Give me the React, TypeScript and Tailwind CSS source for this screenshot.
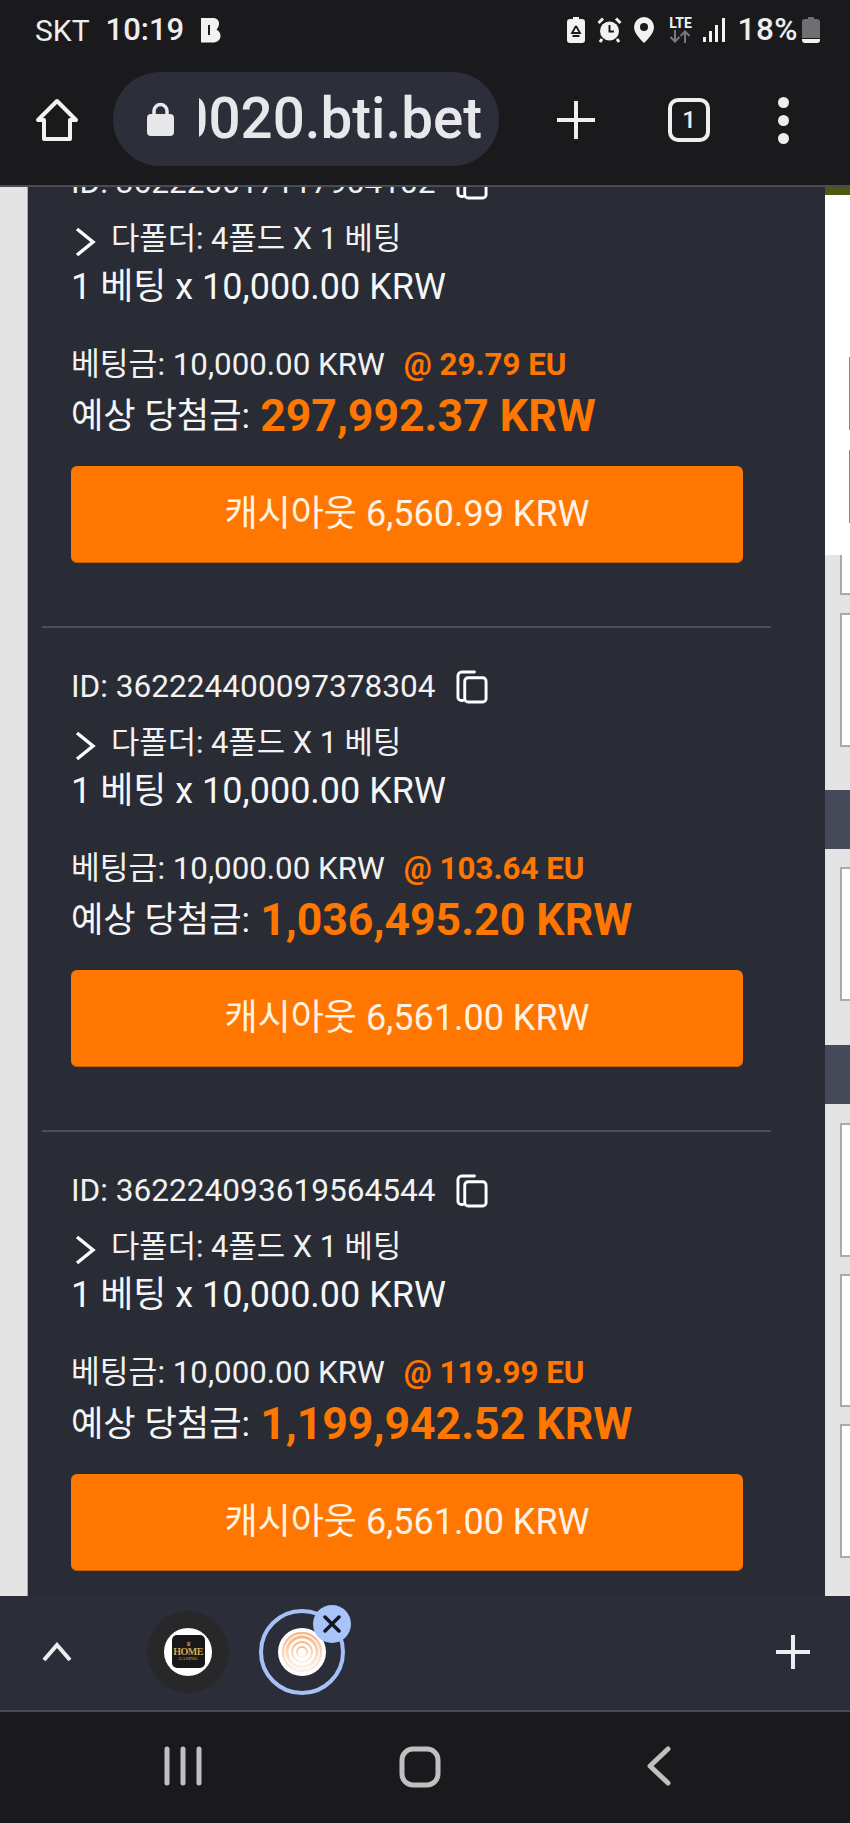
import React from "react";

const FONT = "font-['Roboto','Noto_Sans_CJK_KR',sans-serif]";

const items = [
  { id: "362220017117904102", odds: "@ 29.79 EU", win: "297,992.37 KRW", cash: "캐시아웃 6,560.99 KRW" },
  { id: "362224400097378304", odds: "@ 103.64 EU", win: "1,036,495.20 KRW", cash: "캐시아웃 6,561.00 KRW" },
  { id: "362224093619564544", odds: "@ 119.99 EU", win: "1,199,942.52 KRW", cash: "캐시아웃 6,561.00 KRW" },
];

function CopyIcon() {
  return (
    <svg width="32" height="34" viewBox="0 0 33 35" fill="none" stroke="#fff" strokeWidth="3" className="ml-[21px]">
      <path d="M7 31.5V31.5H5.5A3.5 3.5 0 0 1 2 28V6A4 4 0 0 1 6 2H19" strokeLinecap="round" />
      <rect x="9" y="8" width="22" height="25" rx="3.5" />
    </svg>
  );
}

function Bet({ id, odds, win, cash, last }: { id: string; odds: string; win: string; cash: string; last: boolean }) {
  return (
    <div className="flex flex-col">
      <div className="flex flex-col pl-[43px] pr-[82px] pt-[37px]">
        <div className="flex h-[44px] items-center text-[31.6px] text-[#f2f2f2]">
          <span>ID: {id}</span>
          <CopyIcon />
        </div>
        <div className="mt-[12px] flex h-[44px] items-center text-[30.8px] text-[#f2f2f2]">
          <svg width="22" height="30" viewBox="0 0 22 30" fill="none" stroke="#fff" strokeWidth="3.4" className="ml-[3px] mr-[15px] mt-[6px]">
            <path d="M3 2L19 15L3 28" />
          </svg>
          <span>다폴더: 4폴드 X 1 베팅</span>
        </div>
        <div className="mt-[4px] flex h-[44px] items-center text-[36px] text-[#f6f6f6]">1 베팅 x 10,000.00 KRW</div>
        <div className="mt-[36px] flex h-[40px] items-center text-[31.3px] text-[#f2f2f2]">
          <span>베팅금: 10,000.00 KRW</span>
          <span className="ml-[19px] font-bold text-[#ff7700]">{odds}</span>
        </div>
        <div className="mt-[7px] flex h-[48px] items-center text-[35.2px] text-[#f6f6f6]">
          <span>예상 당첨금:</span>
          <span className="ml-[10px] text-[44.6px] font-bold text-[#ff7700]">{win}</span>
        </div>
        <div className="mt-[26px] flex h-[97px] items-center justify-center rounded-[6px] border-b border-[#c85f00] bg-[#ff7700] text-[36px] text-[#fff3e6]">
          {cash}
        </div>
      </div>
      {!last && <div className="ml-[14px] mt-[63px] h-[2px] w-[729px] bg-[#4a4d58]" />}
    </div>
  );
}

function StatusBar() {
  return (
    <div className="flex h-[60px] items-center pl-[35px] pr-[30px] text-[#eeeeee]">
      <span className="text-[30px]">SKT</span>
      <span className="ml-[16px] text-[31px] font-medium">10:19</span>
      <svg width="21" height="26" viewBox="0 0 21 26" className="ml-[16px]">
        <path fill="#f2f2f2" fillRule="evenodd" d="M1 1H13C17 1 19 3.5 19 6.5C19 9 18 11 16.5 12.5C19 14 20.5 16 20.5 19C20.5 23 17 25.5 13 25.5H1ZM8 8V18H10V8Z" />
      </svg>
      <div className="flex-1" />
      <svg width="18" height="26" viewBox="0 0 18 26" className="mr-[12px]">
        <path fill="#f2f2f2" d="M6 0H12V2H15A3 3 0 0 1 18 5V23A3 3 0 0 1 15 26H3A3 3 0 0 1 0 23V5A3 3 0 0 1 3 2H6Z" />
        <path fill="none" stroke="#1a1a1c" strokeWidth="1.8" d="M9 9L5 16H13L9 9M5.5 19H12.5" />
      </svg>
      <svg width="25" height="26" viewBox="0 0 25 26" className="mr-[12px]">
        <circle cx="12.5" cy="14" r="9.5" fill="#f2f2f2" />
        <path stroke="#1a1a1c" strokeWidth="2" fill="none" d="M12.5 8V14.5H17" />
        <path stroke="#f2f2f2" strokeWidth="3" fill="none" d="M1.5 6L6 1.5M23.5 6L19 1.5M5 22L3 25M20 22L22 25" />
      </svg>
      <svg width="20" height="26" viewBox="0 0 20 26" className="mr-[13px]">
        <path fill="#f2f2f2" fillRule="evenodd" d="M10 0A10 10 0 0 1 20 10C20 16 14 22 10 26C6 22 0 16 0 10A10 10 0 0 1 10 0ZM10 6A4 4 0 1 0 10 14A4 4 0 1 0 10 6Z" />
      </svg>
      <div className="mr-[10px] flex w-[26px] flex-col items-center">
        <span className="text-[14px] font-bold leading-[13px] text-[#f2f2f2]">LTE</span>
        <svg width="24" height="13" viewBox="0 0 24 13" fill="none" stroke="#77787a" strokeWidth="2">
          <path d="M7 0V11M2.5 7L7 11.5L11.5 7M17 13V2M12.5 6L17 1.5L21.5 6" />
        </svg>
      </div>
      <svg width="22" height="24" viewBox="0 0 22 24" className="mr-[12px]" fill="#f2f2f2">
        <rect x="0" y="19" width="3" height="5" />
        <rect x="6" y="13" width="3" height="11" />
        <rect x="12" y="7" width="3" height="17" />
        <rect x="19" y="0" width="3" height="24" />
      </svg>
      <span className="text-[31.5px] font-medium leading-none tracking-[0.5px]">18%</span>
      <svg width="18" height="26" viewBox="0 0 18 26" className="ml-[4px]">
        <path fill="#6f6f71" d="M6 0H12V2H15A3 3 0 0 1 18 5V21H0V5A3 3 0 0 1 3 2H6Z" />
        <path fill="#f2f2f2" d="M0 22H18V23A3 3 0 0 1 15 26H3A3 3 0 0 1 0 23Z" />
      </svg>
    </div>
  );
}

function UrlBar() {
  return (
    <div className="flex h-[125px] items-start pl-[35px] pt-[12px]">
      <svg width="44" height="44" viewBox="0 0 44 44" fill="none" stroke="#f2f2f2" strokeWidth="4" strokeLinejoin="round" className="mt-[26px]">
        <path d="M22 3L41 22H35V41H9V22H3Z" />
      </svg>
      <div className="ml-[34px] flex h-[94px] w-[386px] items-center rounded-full bg-[#2c2f39] pl-[34px]">
        <svg width="27" height="34" viewBox="0 0 27 34" className="shrink-0">
          <path fill="none" stroke="#e8e8ea" strokeWidth="3.5" d="M7 15V9A6.5 6.5 0 0 1 20 9V15" />
          <rect x="0" y="12" width="27" height="22" rx="4" fill="#e8e8ea" />
        </svg>
        <div className="ml-[25px] flex h-full w-[283px] items-center justify-end overflow-hidden">
          <span className="shrink-0 text-[56.5px] font-medium leading-none text-[#e8e8ea]">0020.bti.bet</span>
        </div>
      </div>
      <svg width="38" height="38" viewBox="0 0 38 38" stroke="#eeeeee" strokeWidth="4" className="ml-[58px] mt-[29px]">
        <path d="M19 0V38M0 19H38" />
      </svg>
      <div className="ml-[73px] mt-[26px] flex h-[44px] w-[42px] items-center justify-center rounded-[10px] border-[4px] border-[#eeeeee] text-[24px] font-medium text-[#eeeeee]">1</div>
      <div className="ml-[68px] mt-[25px] flex flex-col gap-[7px]">
        <div className="h-[11px] w-[11px] rounded-full bg-[#eeeeee]" />
        <div className="h-[11px] w-[11px] rounded-full bg-[#eeeeee]" />
        <div className="h-[11px] w-[11px] rounded-full bg-[#eeeeee]" />
      </div>
    </div>
  );
}

function RailBox({ h, mt }: { h: number; mt: string }) {
  return <div style={{ height: h }} className={`${mt} ml-[15px] border-y-2 border-l-2 border-[#a9a9a9] bg-white`} />;
}

function RightRail() {
  return (
    <div className="flex w-[25px] shrink-0 flex-col bg-[#e4e4e4]">
      <div className="h-[8px] bg-[#4a5a12]" />
      <div className="flex h-[360px] flex-col items-end bg-white pt-[162px]">
        <div className="h-[73px] w-[1px] bg-[#8a8a8a]" />
        <div className="mt-[20px] h-[73px] w-[1px] bg-[#8a8a8a]" />
      </div>
      <div className="ml-[15px] h-[40px] border-b-2 border-l-2 border-[#a9a9a9] bg-white" />
      <RailBox h={134} mt="mt-[18px]" />
      <div className="mt-[43px] h-[59px] bg-[#444a58]" />
      <RailBox h={134} mt="mt-[18px]" />
      <div className="mt-[44px] h-[59px] bg-[#444a58]" />
      <RailBox h={134} mt="mt-[19px]" />
      <RailBox h={133} mt="mt-[17px]" />
      <RailBox h={134} mt="mt-[17px]" />
    </div>
  );
}

function TabDock() {
  return (
    <div className="flex h-[116px] items-center border-b-2 border-[#4a4c55] bg-[#2b2e38] pb-[3px]">
      <svg width="30" height="20" viewBox="0 0 30 20" fill="none" stroke="#eeeeee" strokeWidth="4" className="ml-[42px]">
        <path d="M2 18L15 3L28 18" />
      </svg>
      <div className="ml-[75px] flex h-[82px] w-[82px] items-center justify-center rounded-full bg-[#28282a]">
        <div className="flex h-[48px] w-[48px] items-center justify-center rounded-full bg-white">
          <div className="flex h-[33px] w-[33px] flex-col items-center justify-center rounded-[5px] bg-[#18181a] font-['Liberation_Serif',serif] text-[#d2a94e]">
            <span className="text-[6px] leading-[6px]">♛</span>
            <span className="text-[10px] font-bold leading-[9px] tracking-[-0.5px]">HOME</span>
            <span className="text-[5px] leading-[6px]">CASINO</span>
          </div>
        </div>
      </div>
      <div className="relative ml-[30px] flex h-[86px] w-[86px] items-center justify-center rounded-full border-[4px] border-[#a6c0f8]">
        <div className="flex h-[48px] w-[48px] items-center justify-center rounded-full bg-white">
          <svg width="40" height="40" viewBox="0 0 40 40" fill="none" stroke="#f9c9a6" strokeWidth="2">
            <defs>
              <linearGradient id="fade" x1="0" y1="0" x2="0" y2="1">
                <stop offset="0" stopColor="#f7b88c" />
                <stop offset="1" stopColor="#fdf2ea" />
              </linearGradient>
            </defs>
            <g stroke="url(#fade)">
              <circle cx="20" cy="20" r="5" />
              <circle cx="20" cy="20" r="10" />
              <circle cx="20" cy="20" r="15" strokeWidth="3" />
              <circle cx="20" cy="20" r="19" strokeWidth="2.5" />
            </g>
          </svg>
        </div>
        <div className="absolute left-[50px] top-[-8px] flex h-[38px] w-[38px] items-center justify-center rounded-full bg-[#a9c3fb]">
          <svg width="18" height="18" viewBox="0 0 18 18" stroke="#14161c" strokeWidth="3.4" strokeLinecap="round">
            <path d="M2 2L16 16M16 2L2 16" />
          </svg>
        </div>
      </div>
      <div className="flex-1" />
      <svg width="34" height="34" viewBox="0 0 34 34" stroke="#eeeeee" strokeWidth="4" className="mr-[40px]">
        <path d="M17 0V34M0 17H34" />
      </svg>
    </div>
  );
}

function NavBar() {
  return (
    <div className="relative flex flex-1 items-start bg-[#1a1a1c] pt-[34px]">
      <svg width="38" height="40" viewBox="0 0 38 40" stroke="#c0c0c2" strokeWidth="5" strokeLinecap="round" className="ml-[164px]">
        <path d="M3 3V37M19 3V37M35 3V37" />
      </svg>
      <svg width="42" height="42" viewBox="0 0 42 42" fill="none" stroke="#c0c0c2" strokeWidth="5" className="ml-[197px]">
        <rect x="3" y="3" width="36" height="36" rx="11" />
      </svg>
      <svg width="24" height="40" viewBox="0 0 24 40" fill="none" stroke="#c0c0c2" strokeWidth="5" strokeLinecap="round" strokeLinejoin="round" className="ml-[206px]">
        <path d="M21 3L3 20L21 37" />
      </svg>
    </div>
  );
}

export default function App() {
  return (
    <div className={`flex h-[1823px] w-[850px] flex-col overflow-hidden bg-[#1a1a1c] ${FONT}`}>
      <div className="border-b-2 border-[#4a4c55]">
        <StatusBar />
        <UrlBar />
      </div>
      <div className="flex h-[1409px] shrink-0 overflow-hidden">
        <div className="w-[28px] shrink-0 border-r border-[#a9a9a9] bg-[#e4e4e4]" />
        <div className="flex-1 overflow-hidden bg-[#292c35]">
          <div className="mt-[-63px]">
            {items.map((it, i) => (
              <Bet key={it.id} {...it} last={i === items.length - 1} />
            ))}
          </div>
        </div>
        <RightRail />
      </div>
      <TabDock />
      <NavBar />
    </div>
  );
}
